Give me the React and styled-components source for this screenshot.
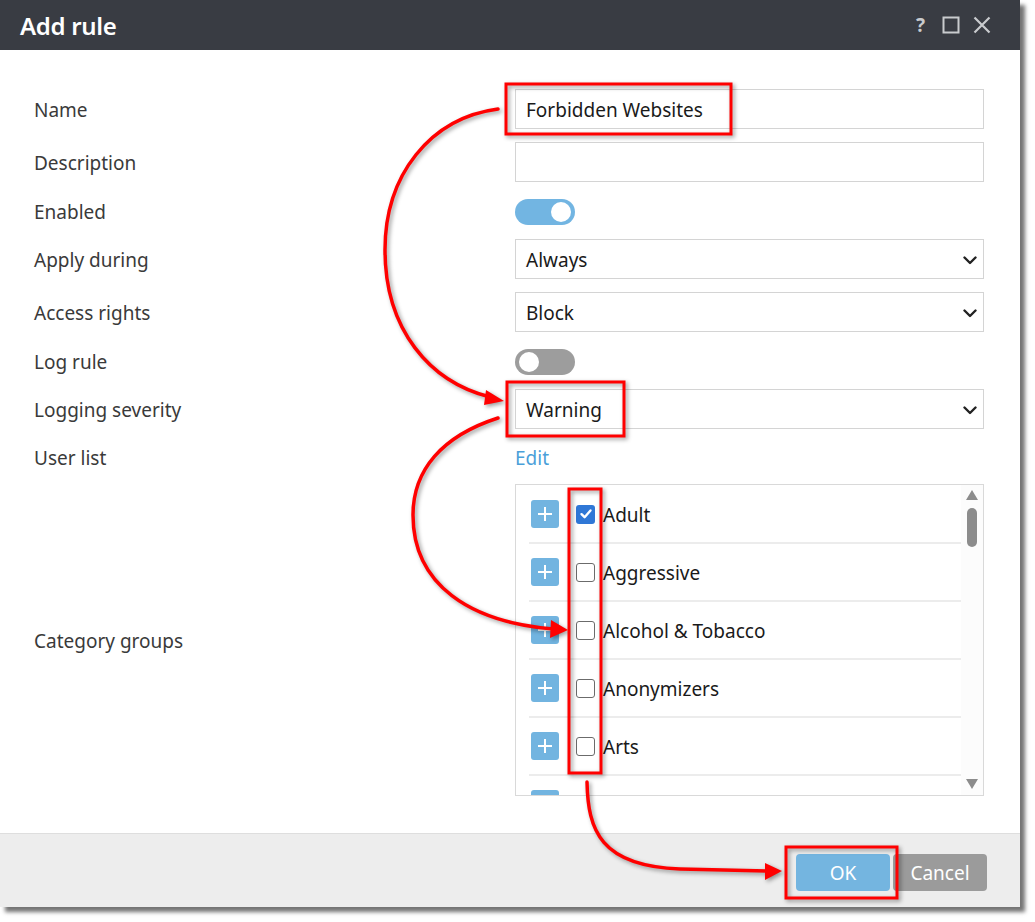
import React from "react"
import styled, { createGlobalStyle } from "styled-components"

const GlobalStyle = createGlobalStyle`
  html, body {
    margin: 0;
    padding: 0;
    background: #ffffff;
  }
  body {
    font-family: "Noto Sans", "Open Sans", "DejaVu Sans", sans-serif;
  }
`

// the last row is only half visible under the list edge, so it has no label
const categories = [
  { name: "Adult", checked: true },
  { name: "Aggressive" },
  { name: "Alcohol & Tobacco" },
  { name: "Anonymizers" },
  { name: "Arts" },
  { name: "" },
]

const Chevron = () => (
  <svg width="14" height="9" viewBox="0 0 14 9">
    <path d="M1.5 1.5 L7 7 L12.5 1.5" fill="none" stroke="#222" strokeWidth="2.4" strokeLinecap="round" strokeLinejoin="round" />
  </svg>
)

const PlusIcon = () => (
  <svg width="16" height="16" viewBox="0 0 16 16">
    <path d="M8 1 V15 M1 8 H15" stroke="#fff" strokeWidth="2" />
  </svg>
)

const CheckIcon = () => (
  <svg width="14" height="14" viewBox="0 0 14 14">
    <path d="M2.5 7.2 L5.6 10.2 L11.5 3.5" fill="none" stroke="#fff" strokeWidth="2.4" strokeLinecap="round" strokeLinejoin="round" />
  </svg>
)

const Annotations = () => (
  <Overlay width="1035" height="922" viewBox="0 0 1035 922">
    <g fill="none" stroke="#ff0000" strokeWidth="3.5" strokeLinecap="round">
      <rect x="506" y="84" width="225" height="50" strokeWidth="3" />
      <rect x="507" y="382" width="117" height="54" strokeWidth="3" />
      <rect x="569" y="489" width="32" height="284" strokeWidth="3" />
      <rect x="786" y="847" width="111" height="51" strokeWidth="3" />
      <path d="M498 109 C430 118 385 175 385 250 C385 330 430 382 490 397" />
      <path d="M498 418 C442 436 413 470 413 515 C413 585 470 622 553 629" />
      <path d="M587 782 C588 830 600 866 680 869 L767 871" />
    </g>
    <g fill="#ff0000">
      <polygon points="504,401 486,390 484,405" />
      <polygon points="568,630 551,620 550,638" />
      <polygon points="782,871 765,863 765,880" />
    </g>
  </Overlay>
)

export default function App() {
  return (
    <>
      <GlobalStyle />
      <Page>
        <Dialog>
          <TitleBar>
            <Title>Add rule</Title>
            <TitleActions>
              <Help>?</Help>
              <svg width="18" height="18" viewBox="0 0 18 18">
                <rect x="1.5" y="1.5" width="15" height="15" fill="none" stroke="#c9cbce" strokeWidth="2" />
              </svg>
              <svg width="18" height="18" viewBox="0 0 18 18">
                <path d="M1.5 1.5 L16.5 16.5 M16.5 1.5 L1.5 16.5" stroke="#c9cbce" strokeWidth="2.2" />
              </svg>
            </TitleActions>
          </TitleBar>

          <Body>
            <Row>
              <Label>Name</Label>
              <TextInput>Forbidden Websites</TextInput>
            </Row>
            <Row>
              <Label>Description</Label>
              <TextInput />
            </Row>
            <Row $h={31}>
              <Label>Enabled</Label>
              <Toggle $on>
                <Knob $on />
              </Toggle>
            </Row>
            <Row>
              <Label>Apply during</Label>
              <Select>
                Always
                <Chevron />
              </Select>
            </Row>
            <Row>
              <Label>Access rights</Label>
              <Select>
                Block
                <Chevron />
              </Select>
            </Row>
            <Row $h={31}>
              <Label>Log rule</Label>
              <Toggle>
                <Knob />
              </Toggle>
            </Row>
            <Row>
              <Label>Logging severity</Label>
              <Select>
                Warning
                <Chevron />
              </Select>
            </Row>
            <Row $h={29}>
              <Label>User list</Label>
              <EditLink>Edit</EditLink>
            </Row>
            <Row $h={312}>
              <Label>Category groups</Label>
              <ListBox>
                <ListItems>
                  {categories.map((c, i) => (
                    <ListRow key={i}>
                      <PlusButton>
                        <PlusIcon />
                      </PlusButton>
                      <Checkbox $checked={c.checked}>{c.checked && <CheckIcon />}</Checkbox>
                      {c.name && <ItemText>{c.name}</ItemText>}
                    </ListRow>
                  ))}
                </ListItems>
                <ScrollBar>
                  <svg width="12" height="10" viewBox="0 0 12 10">
                    <polygon points="6,0 12,10 0,10" fill="#8c8c8c" />
                  </svg>
                  <Thumb />
                  <Track />
                  <svg width="12" height="10" viewBox="0 0 12 10">
                    <polygon points="0,0 12,0 6,10" fill="#8c8c8c" />
                  </svg>
                </ScrollBar>
              </ListBox>
            </Row>
          </Body>

          <Footer>
            <Button $primary>OK</Button>
            <Button>Cancel</Button>
          </Footer>
        </Dialog>
        <Annotations />
      </Page>
    </>
  )
}

const Page = styled.div`
  position: relative;
  width: 1035px;
  height: 922px;
  overflow: hidden;
  background: #fff;
`

const Overlay = styled.svg`
  position: absolute;
  top: 0;
  left: 0;
  pointer-events: none;
  filter: drop-shadow(2px 2px 2px rgba(0, 0, 0, 0.4));
`

const Dialog = styled.div`
  width: 1020px;
  height: 907px;
  display: flex;
  flex-direction: column;
  background: #fff;
  box-shadow: 5px 5px 4px rgba(0, 0, 0, 0.55);
`

const TitleBar = styled.div`
  height: 50px;
  flex: none;
  background: #393c43;
  display: flex;
  align-items: center;
  justify-content: space-between;
  padding: 0 29px 0 20px;
`

const Title = styled.div`
  color: #fff;
  font-size: 24px;
  font-weight: 600;
  letter-spacing: -0.3px;
`

const TitleActions = styled.div`
  display: flex;
  align-items: center;
  gap: 13px;
`

const Help = styled.span`
  color: #c9cbce;
  font-size: 19px;
  font-weight: 700;
  margin-right: 4px;
`

const Body = styled.div`
  flex: 1;
  display: flex;
  flex-direction: column;
  gap: 13px;
  padding: 39px 36px 0 34px;
`

const Row = styled.div`
  display: grid;
  grid-template-columns: 481px 469px;
  align-items: center;
  height: ${(p) => p.$h || 40}px;
`

const Label = styled.div`
  font-size: 19px;
  color: #3a3a3a;
  padding-top: 2px;
`

const TextInput = styled.div`
  height: 40px;
  box-sizing: border-box;
  border: 1px solid #d4d4d4;
  padding: 2px 10px 0;
  display: flex;
  align-items: center;
  font-size: 19px;
  color: #1a1a1a;
`

const Select = styled(TextInput)`
  justify-content: space-between;
  padding-right: 6px;
`

const Toggle = styled.div`
  width: 60px;
  height: 26px;
  border-radius: 13px;
  background: ${(p) => (p.$on ? "#72b5e2" : "#9d9d9d")};
  display: flex;
  align-items: center;
  justify-content: ${(p) => (p.$on ? "flex-end" : "flex-start")};
  padding: 0 4px;
  box-sizing: border-box;
  margin-top: 3px;
`

const Knob = styled.div`
  width: 20px;
  height: 20px;
  border-radius: 50%;
  background: #fff;
`

const EditLink = styled.a`
  color: #4a9fd9;
  font-size: 19px;
  cursor: pointer;
  padding-top: 2px;
`

const ListBox = styled.div`
  height: 312px;
  box-sizing: border-box;
  border: 1px solid #d9d9d9;
  display: flex;
  overflow: hidden;
`

const ListItems = styled.div`
  flex: 1;
  padding: 1px 0 0 13px;
  display: flex;
  flex-direction: column;
`

const ListRow = styled.div`
  height: 56px;
  flex: none;
  border-bottom: 2px solid #ececec;
  display: flex;
  align-items: center;
  padding-left: 2px;
`

const PlusButton = styled.div`
  width: 28px;
  height: 28px;
  border-radius: 3px;
  background: #72b4e0;
  display: flex;
  align-items: center;
  justify-content: center;
  margin-right: 17px;
`

const Checkbox = styled.div`
  width: 19px;
  height: 19px;
  box-sizing: border-box;
  border-radius: 3px;
  border: ${(p) => (p.$checked ? "none" : "1.5px solid #6b6b6b")};
  background: ${(p) => (p.$checked ? "#2f77d6" : "#fff")};
  display: flex;
  align-items: center;
  justify-content: center;
  margin-right: 8px;
`

const ItemText = styled.span`
  font-size: 19px;
  color: #1a1a1a;
  padding-top: 2px;
`

const ScrollBar = styled.div`
  width: 22px;
  flex: none;
  background: #fcfcfc;
  display: flex;
  flex-direction: column;
  align-items: center;
  padding: 5px 0 6px;
  box-sizing: border-box;
`

const Thumb = styled.div`
  width: 10px;
  height: 39px;
  margin-top: 8px;
  border-radius: 5px;
  background: #8c8c8c;
`

const Track = styled.div`
  flex: 1;
`

const Footer = styled.div`
  height: 74px;
  flex: none;
  box-sizing: border-box;
  background: #ededed;
  border-top: 1px solid #dedede;
  display: flex;
  justify-content: flex-end;
  align-items: flex-start;
  gap: 3px;
  padding: 20px 33px 0 0;
`

const Button = styled.div`
  width: 94px;
  height: 37px;
  border-radius: 4px;
  background: ${(p) => (p.$primary ? "#74b5e0" : "#9b9b9b")};
  color: #fff;
  font-size: 19px;
  display: flex;
  align-items: center;
  justify-content: center;
`
